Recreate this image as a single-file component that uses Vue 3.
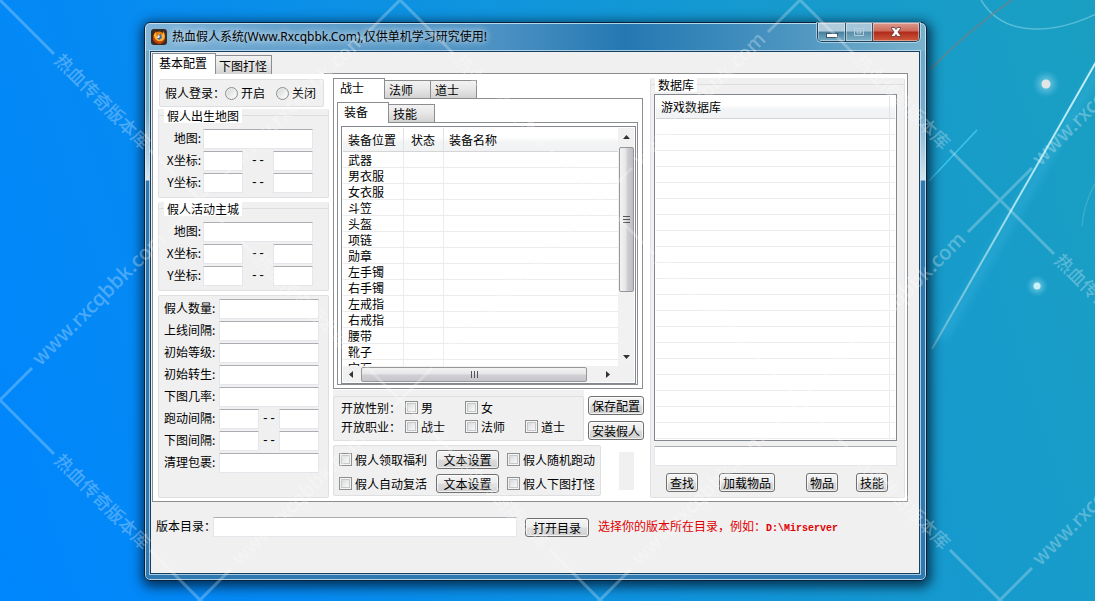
<script setup>
import { ref } from 'vue'

const slots = ['武器', '男衣服', '女衣服', '斗笠', '头盔', '项链', '勋章', '左手镯', '右手镯', '左戒指', '右戒指', '腰带', '靴子', '宝石']
const mapGroups = [
  { id: 'birth', title: '假人出生地图' },
  { id: 'city', title: '假人活动主城' }
]
const settings = [
  { label: '假人数量:' },
  { label: '上线间隔:' },
  { label: '初始等级:' },
  { label: '初始转生:' },
  { label: '下图几率:' },
  { label: '跑动间隔:', range: true },
  { label: '下图间隔:', range: true },
  { label: '清理包裹:' }
]
const login = ref('')

const marks = []
for (let row = 0; row < 4; row++) {
  for (let col = 0; col < 6; col++) {
    if ((row + col) % 2 === 0) marks.push({ x: col * 200, y: row * 200, cn: row < 3, en: row > 0 })
  }
}
</script>

<template>
  <div class="desktop">
    <svg class="wallpaper" width="200" height="360" viewBox="895 0 200 360" aria-hidden="true">
      <defs>
        <radialGradient id="glow">
          <stop offset="0" stop-color="#fff" stop-opacity=".55" />
          <stop offset="1" stop-color="#6fd8f0" stop-opacity="0" />
        </radialGradient>
        <linearGradient id="ray" x1="1" y1="0" x2="0" y2="1">
          <stop offset="0" stop-color="#c8eef6" />
          <stop offset=".5" stop-color="#a5e2f2" />
          <stop offset="1" stop-color="#8cc8d8" stop-opacity=".6" />
        </linearGradient>
        <filter id="soft"><feGaussianBlur stdDeviation="4" /></filter>
      </defs>
      <path d="M1100 68L942 338" stroke="#4fc4f0" stroke-opacity=".3" stroke-width="8" filter="url(#soft)" />
      <path d="M1096 62L932 349" stroke="url(#ray)" stroke-width="2" />
      <path d="M981 0Q998 28 1034 29Q1062 30 1096 14" fill="none" stroke="#6cc8de" stroke-opacity=".75" stroke-width="1.5" />
      <path d="M930 70Q966 32 1012 0" fill="none" stroke="#7a7f80" stroke-opacity=".6" stroke-width="2" />
      <path d="M929 181L977 130" stroke="#3cc6ec" stroke-width="1.5" />
      <path d="M1096 182Q1084 203 1082 226" fill="none" stroke="#4ab8d4" stroke-opacity=".6" stroke-width="1.5" />
      <circle cx="1046" cy="84" r="14" fill="url(#glow)" />
      <circle cx="1046" cy="84" r="4.5" fill="#dfe6e6" />
      <circle cx="1037" cy="286" r="11" fill="url(#glow)" />
      <circle cx="1037" cy="286" r="3.5" fill="#c8f2f8" />
    </svg>

    <main class="window">
      <header class="titlebar">
        <svg class="app-icon" width="16" height="16" viewBox="0 0 16 16" aria-hidden="true">
          <rect width="16" height="16" rx="3" fill="#3a2a22" />
          <circle cx="8" cy="8.5" r="6" fill="#e8780c" />
          <path d="M2.5 5Q3 10 7 12Q12 13 14 8Q14 13 9.500 15Q4 15 2 10Z" fill="#c43c08" />
          <path d="M5 2Q4 6 7 8L8 4L10 6Q13 5 12 2Q15 6 13 10Q11 13 7 12Q3 10 3 6Z" fill="#ffb62a" />
          <path d="M7 6L10 5L11 9L8 11L6 9Z" fill="#4467a8" />
          <path d="M7 6L9 7L8 9L6 9Z" fill="#f5ede0" />
        </svg>
        <h1>热血假人系统(Www.Rxcqbbk.Com),仅供单机学习研究使用!</h1>
        <div class="caption-buttons">
          <button type="button" class="cap min" aria-label="最小化">
            <svg width="12" height="14" viewBox="0 0 12 14"><rect x=".5" y="8.500" width="11" height="4" fill="#fff" stroke="#42566a" /></svg>
          </button>
          <button type="button" class="cap max" aria-label="最大化">
            <svg width="12" height="12" viewBox="0 0 12 12"><path d="M1.500 2.500H10.500V9.500H1.500ZM4 5H8V7H4Z" fill="none" stroke="#b4cfdc" /></svg>
          </button>
          <button type="button" class="cap close" aria-label="关闭窗口">
            <svg width="14" height="12" viewBox="0 0 14 12"><path d="M2.500 1.500H5.500L7 3.500L8.500 1.500H11.500V2.500L9 6L11.500 9.500V10.500H8.500L7 8.500L5.500 10.500H2.500V9.500L5 6L2.500 2.500Z" fill="#fff" stroke="#5a3036" stroke-width=".8" /></svg>
          </button>
        </div>
      </header>

      <div class="client">
        <nav class="tabs main-tabs">
          <button type="button" class="tab active">基本配置</button>
          <button type="button" class="tab">下图打怪</button>
          <span class="tab-space"></span>
          <span class="tab-line"></span>
        </nav>

        <section class="page">
          <div class="left">
            <div class="login panel" role="radiogroup" aria-label="假人登录">
              <span class="caption">假人登录：</span>
              <label><input v-model="login" type="radio" name="login" value="on" />开启</label>
              <label><input v-model="login" type="radio" name="login" value="off" />关闭</label>
            </div>

            <div v-for="g in mapGroups" :key="g.id" class="group" role="group" :aria-labelledby="g.id">
              <div class="legend"><span :id="g.id">{{ g.title }}</span></div>
              <div class="rows">
                <div class="row">
                  <label class="name" :for="g.id + '-map'">地图:</label>
                  <input :id="g.id + '-map'" type="text" class="map" />
                </div>
                <div v-for="axis in ['X', 'Y']" :key="axis" class="row">
                  <label class="name" :for="g.id + axis">{{ axis }}坐标:</label>
                  <input :id="g.id + axis" type="text" class="short" />
                  <span class="dash wide">--</span>
                  <input type="text" class="short" :aria-label="axis + '坐标上限'" />
                </div>
              </div>
            </div>

            <div class="panel settings">
              <div v-for="(s, i) in settings" :key="s.label" class="row">
                <label class="name" :for="'set' + i">{{ s.label }}</label>
                <input :id="'set' + i" type="text" :class="s.range ? 'short' : 'long'" />
                <template v-if="s.range">
                  <span class="dash">--</span>
                  <input type="text" class="short" :aria-label="s.label + '上限'" />
                </template>
              </div>
            </div>
          </div>

          <div class="middle">
            <nav class="tabs sub">
              <button type="button" class="tab active">战士</button>
              <button type="button" class="tab">法师</button>
              <button type="button" class="tab">道士</button>
            </nav>
            <div class="tab-body outer">
              <nav class="tabs sub">
                <button type="button" class="tab active">装备</button>
                <button type="button" class="tab">技能</button>
              </nav>
              <div class="tab-body inner">
                <div class="list equip">
                  <div class="viewport">
                    <table>
                      <colgroup><col class="c1" /><col class="c2" /><col /></colgroup>
                      <thead><tr><th>装备位置</th><th>状态</th><th>装备名称</th></tr></thead>
                      <tbody>
                        <tr v-for="s in slots" :key="s"><td>{{ s }}</td><td></td><td></td></tr>
                      </tbody>
                    </table>
                  </div>
                  <div class="vbar">
                    <svg width="7" height="4" viewBox="0 0 7 4"><path d="M0 4L3.500 0L7 4Z" fill="#333" /></svg>
                    <div class="vthumb"><i></i><i></i><i></i></div>
                    <svg class="end" width="7" height="4" viewBox="0 0 7 4"><path d="M0 0L3.500 4L7 0Z" fill="#333" /></svg>
                  </div>
                  <div class="hbar">
                    <svg width="4" height="7" viewBox="0 0 4 7"><path d="M4 0L0 3.500L4 7Z" fill="#333" /></svg>
                    <div class="hthumb"><i></i><i></i><i></i></div>
                    <svg class="end" width="4" height="7" viewBox="0 0 4 7"><path d="M0 0L4 3.500L0 7Z" fill="#333" /></svg>
                  </div>
                  <div class="corner"></div>
                </div>
              </div>
            </div>

            <div class="open-line">
              <div class="open">
                <div class="open-box">
                  <span>开放性别：</span>
                  <label><input type="checkbox" />男</label>
                  <label><input type="checkbox" />女</label>
                  <span></span>
                  <span>开放职业：</span>
                  <label><input type="checkbox" />战士</label>
                  <label><input type="checkbox" />法师</label>
                  <label><input type="checkbox" />道士</label>
                </div>
              </div>
              <div class="actions">
                <button type="button" class="btn">保存配置</button>
                <button type="button" class="btn">安装假人</button>
              </div>
            </div>

            <div class="extra-line">
              <div class="extra panel">
                <label><input type="checkbox" />假人领取福利</label>
                <button type="button" class="btn">文本设置</button>
                <label><input type="checkbox" />假人随机跑动</label>
                <label><input type="checkbox" />假人自动复活</label>
                <button type="button" class="btn">文本设置</button>
                <label><input type="checkbox" />假人下图打怪</label>
              </div>
              <div class="meter"></div>
            </div>
          </div>

          <div class="group database" role="group" aria-labelledby="db">
            <div class="legend"><span id="db">数据库</span></div>
            <div class="list db-list">
              <table>
                <colgroup><col /><col class="thin" /></colgroup>
                <thead><tr><th>游戏数据库</th><th></th></tr></thead>
                <tbody><tr v-for="n in 20" :key="n"><td></td><td></td></tr></tbody>
              </table>
            </div>
            <input type="text" class="search" aria-label="查找内容" />
            <div class="db-actions">
              <div class="pair">
                <button type="button" class="btn">查找</button>
                <button type="button" class="btn">加载物品</button>
              </div>
              <div class="pair close-pair">
                <button type="button" class="btn">物品</button>
                <button type="button" class="btn">技能</button>
              </div>
            </div>
          </div>
        </section>

        <footer class="path">
          <label for="dir">版本目录：</label>
          <input id="dir" type="text" />
          <button type="button" class="btn">打开目录</button>
          <p>选择你的版本所在目录，例如：<span class="mono">D:\Mirserver</span></p>
        </footer>
      </div>
    </main>

    <svg class="watermark" aria-hidden="true">
      <g v-for="m in marks" :key="m.x + '-' + m.y" :transform="`translate(${m.x} ${m.y})`">
        <path d="M-50 -50L54 54M-32 32L32 -32" />
        <text v-if="m.cn" class="cn" transform="translate(102 102) rotate(45)" y="6">热血传奇版本库</text>
        <text v-if="m.en" class="en" transform="translate(100 -100) rotate(-45)" y="5">www.rxcqbbk.com</text>
      </g>
    </svg>
  </div>
</template>

<style>
body { margin: 0; }
</style>

<style scoped>
* { box-sizing: border-box; }

.desktop {
  position: relative;
  display: flex;
  min-height: 100vh;
  padding: 22px 168px 20px 144px;
  overflow: hidden;
  background: linear-gradient(72deg, #0086fd 0%, #058af3 22%, #1095dc 55%, #169ace 75%, #1a9fc2 100%);
  color: #000;
  font: 12px/16px "Noto Sans CJK SC", sans-serif;
}

button, input { font: inherit; color: inherit; margin: 0; }
h1, p { margin: 0; font: inherit; }

.wallpaper { position: absolute; top: 0; right: 0; }
.watermark { position: absolute; inset: 0; width: 100%; height: 100%; pointer-events: none; }
.watermark path { fill: none; stroke: #fff; stroke-width: 3; stroke-opacity: .25; }
.watermark text { fill: #fff; fill-opacity: .28; text-anchor: middle; font-weight: 500; }
.watermark .cn { font-size: 18px; }
.watermark .en { font-size: 20px; }

.window {
  position: relative;
  flex: 1;
  display: flex;
  flex-direction: column;
  padding: 0 6px 6px 5px;
  border: 1px solid #06243c;
  border-radius: 6px;
  background:
    linear-gradient(90deg, #82b6da 0, #6aa6d0 90px, #4a90c2 360px, #2478b2 480px, #4a94c0 640px, #7ab2cc 100%) top / 100% 28px no-repeat,
    linear-gradient(180deg, #6ba5c8 0, #76acca 90px, #d4e5f0 157px, #2f78b0 158px, #2f78b0 100%);
  box-shadow: inset 0 0 0 1px rgba(220, 240, 252, .75), 1px 3px 12px 3px rgba(0, 20, 40, .75);
}

.titlebar { display: flex; height: 28px; flex: none; padding-left: 1px; align-items: center; }
.app-icon { flex: none; }
h1 {
  flex: 1;
  margin-left: 5px;
  font-family: "Noto Sans", "Noto Sans CJK SC", sans-serif;
  white-space: nowrap;
  text-shadow: 0 0 6px rgba(255, 255, 255, .8), 0 0 10px rgba(255, 255, 255, .7);
}
.caption-buttons {
  display: flex;
  align-self: flex-start;
  height: 19px;
  border: 1px solid #23445c;
  border-top: 0;
  border-radius: 0 0 5px 5px;
  overflow: hidden;
  box-shadow: 0 0 0 1px rgba(210, 235, 248, .6);
}
.cap { display: flex; align-items: center; justify-content: center; padding: 0; border: 0; box-shadow: inset 0 0 0 1px rgba(255, 255, 255, .4); }
.min, .max { width: 27px; border-right: 1px solid #31536a; background: linear-gradient(#a4c6d8 0 45%, #5a8ca8 50%, #7fb2c8); }
.min { width: 28px; background: linear-gradient(#b0ccdc 0 45%, #47809f 50%, #78acc4); }
.close { width: 46px; background: linear-gradient(#dc9a8c 0, #cc6a58 45%, #b02a1c 50%, #cf5a3c); }

.client {
  flex: 1;
  padding: 1px 11px 0 1px;
  border: 1px solid #163f60;
  background: #f0f0f0;
  box-shadow: 0 0 0 1px rgba(205, 230, 245, .75);
}

.tabs { display: flex; align-items: flex-end; height: 20px; }
.tab {
  height: 18px;
  padding: 0 4px;
  border: 1px solid #8b8d90;
  border-left-width: 0;
  border-bottom: 0;
  background: linear-gradient(#f2f2f2 0, #e8e8e8 45%, #d2d2d2 100%);
  line-height: 17px;
  text-align: left;
  white-space: nowrap;
}
.tab.active { position: relative; height: 20px; border-left-width: 1px; background: #fff; line-height: 16px; }
.main-tabs { height: 21px; }
.main-tabs .tab { width: 56px; height: 19px; padding: 0 3px; }
.main-tabs .tab.active { width: 64px; height: 21px; padding: 0 6px 2px; }
.tab-space { width: 52px; }
.tab-line { flex: 1; border-bottom: 1px solid #8b8d90; }
.sub .tab { width: 46px; }
.sub .tab.active { width: 52px; height: 21px; margin-bottom: -1px; padding: 0 6px 2px; }
.inner-tabs .tab { width: 44px; }

.page {
  display: grid;
  grid-template-columns: 171px 312px minmax(240px, 1fr);
  column-gap: 4px;
  padding: 0 2px 3px 5px;
  border: 1px solid #8b8d90;
  border-top: 0;
  background: #fff;
}

.panel { border: 1px solid #dedfe1; border-radius: 2px; background: #f0f0f0; }
.group {
  border: 1px solid #e0e1e3;
  border-top: 0;
  border-radius: 2px;
  background: #f0f0f0;
}
.legend { display: flex; align-items: center; height: 13px; }
.legend::before { content: ""; width: 5px; border-top: 1px solid #dcdde0; }
.legend::after { content: ""; flex: 1; border-top: 1px solid #dcdde0; }
.legend span { padding: 0 3px; background: #fff; line-height: 15px; }

.left { display: flex; flex-direction: column; padding-top: 5px; }
.login { display: flex; align-items: center; height: 28px; margin: 0 5px 2px 1px; padding-left: 5px; }
.login .caption { width: 60px; flex: none; white-space: nowrap; }
.login label { width: 51px; flex: none; display: flex; align-items: center; gap: 3px; white-space: nowrap; }
input[type="radio"], input[type="checkbox"] {
  appearance: none;
  flex: none;
  width: 13px;
  height: 13px;
  border: 1px solid #8e8f8f;
  background: linear-gradient(135deg, #cfd2d5, #f6f6f6 75%);
  box-shadow: inset 0 0 0 1px #f4f4f4, inset 0 0 0 2px #c6c8ca;
}
input[type="radio"] { border-radius: 50%; box-shadow: inset 0 0 0 1px #eee; }
input[type="text"] {
  height: 20px;
  min-width: 0;
  padding: 0 2px;
  border: 1px solid #e3e6ea;
  border-top-color: #abadb3;
  border-radius: 1px;
  background: #fff;
  outline: none;
}

.rows { display: flex; flex-direction: column; gap: 2px; padding: 7px 0 4px; }
.row { display: flex; align-items: center; }
.row .name { width: 44px; padding: 0 2px 2px 0; text-align: right; white-space: nowrap; }
.row .map { width: 110px; }
.row .short { width: 40px; }
.row .long { width: 100px; }
.dash { width: 20px; text-align: center; font: 12px/16px "Liberation Mono", monospace; }
.dash.wide { width: 30px; }
.left .group { margin-bottom: 4px; }
.settings { display: flex; flex-direction: column; gap: 2px; flex: 1; margin: 0; padding-top: 3px; }
.settings .name { width: 60px; padding: 0 0 2px 5px; text-align: left; }

.middle { padding-top: 4px; }
.tab-body { border: 1px solid #8b8d90; background: #fff; }
.outer { width: 310px; padding: 3px 4px 3px 3px; }
.inner { padding: 3px 1px 0 3px; }
.list { border: 1px solid #828790; background: #fff; }
.equip { display: grid; grid-template: 238px 16px / 1fr 16px; padding: 1px; }
.viewport { overflow: hidden; }
table { width: 100%; border-collapse: separate; border-spacing: 0; table-layout: fixed; }
th, td { padding: 0 5px; border-right: 1px solid #ececec; text-align: left; font-weight: 400; white-space: nowrap; }
th { height: 24px; border-bottom: 1px solid #d5d5d5; border-right-color: #e2e3e5; background: linear-gradient(#fff 40%, #f3f4f5 60%, #f1f2f4); }
td { height: 16px; border-bottom: 1px solid #ececec; line-height: 15px; }
th:last-child, td:last-child { border-right: 0; }
.equip th:nth-child(2) { padding-left: 7px; }
.c1 { width: 61px; }
.c2 { width: 40px; }
.thin { width: 5px; }
.vbar, .hbar { display: flex; align-items: center; background: #f1f1f1; }
.vbar { flex-direction: column; padding: 7px 0; }
.vthumb {
  display: flex; flex-direction: column; align-items: center; justify-content: center; gap: 2px;
  width: 15px; height: 145px; margin: 8px 0 auto;
  border: 1px solid #979797; border-radius: 2px;
  background: linear-gradient(90deg, #f3f3f3, #e6e6e8 45%, #cfcfd4 55%, #bcbcc2);
}
.vthumb i { width: 7px; height: 1px; background: #555; }
.hbar { padding: 0 8px 0 6px; }
.hthumb {
  display: flex; align-items: center; justify-content: center; gap: 2px;
  width: 226px; height: 15px; margin: 0 auto 0 8px;
  border: 1px solid #979797; border-radius: 2px;
  background: linear-gradient(#f3f3f3, #e6e6e8 45%, #cfcfd4 55%, #c4c4ca);
}
.hthumb i { width: 1px; height: 7px; background: #555; }
.corner { background: #f0f0f0; }

.open-line { display: flex; gap: 4px; margin-top: 1px; }
.open { width: 251px; padding-top: 6px; background: #f0f0f0; }
.open-box {
  display: grid;
  grid-template: 19px 19px / 64px 60px 60px 1fr;
  align-items: center;
  height: 45px;
  padding: 1px 0 0 7px;
  border: 1px solid #dedfe1;
  border-radius: 2px;
}
.open-box label, .extra label { display: flex; align-items: center; gap: 3px; white-space: nowrap; }
.actions { display: flex; flex-direction: column; gap: 6px; width: 56px; padding-top: 6px; }
.btn {
  height: 19px;
  padding: 0 3px;
  border: 1px solid #707070;
  border-radius: 3px;
  background: linear-gradient(#f4f4f4 0, #ececec 48%, #dcdcdc 52%, #d0d0d0 100%);
  box-shadow: inset 0 0 0 1px rgba(255, 255, 255, .7);
  line-height: 17px;
  white-space: nowrap;
}
.extra-line { display: flex; align-items: flex-end; margin-top: 4px; }
.extra {
  display: grid;
  grid-template: 19px 19px / 97px 63px 1fr;
  align-items: center;
  row-gap: 5px;
  width: 268px;
  height: 51px;
  padding: 4px 0 0 5px;
}
.extra label:nth-child(3n) { padding-left: 8px; }
.meter { width: 15px; height: 38px; margin: 0 0 6px 18px; background: #f0f0f0; }

.database { display: flex; flex-direction: column; margin: 4px 0 0 1px; padding: 0 7px 5px 3px; }
.database .legend { margin: 0 -7px 3px -3px; }
.database .legend::before { width: 4px; }
.db-list { flex: 1; padding: 1px; }
.db-list th { height: 23px; }
.search { width: 100%; margin-top: 5px; }
.db-actions { display: flex; justify-content: space-between; margin-top: 7px; padding: 0 9px 0 12px; }
.pair { display: flex; gap: 21px; }
.close-pair { gap: 18px; }

.path { display: flex; align-items: center; padding: 15px 0 16px 4px; }
.path label { width: 57px; padding-bottom: 2px; white-space: nowrap; }
.path input { width: 304px; }
.path .btn { width: 64px; margin: 0 9px 0 8px; }
.path p { color: #e00000; white-space: nowrap; }
.mono { font: bold 10px/16px "Liberation Mono", monospace; }
</style>
